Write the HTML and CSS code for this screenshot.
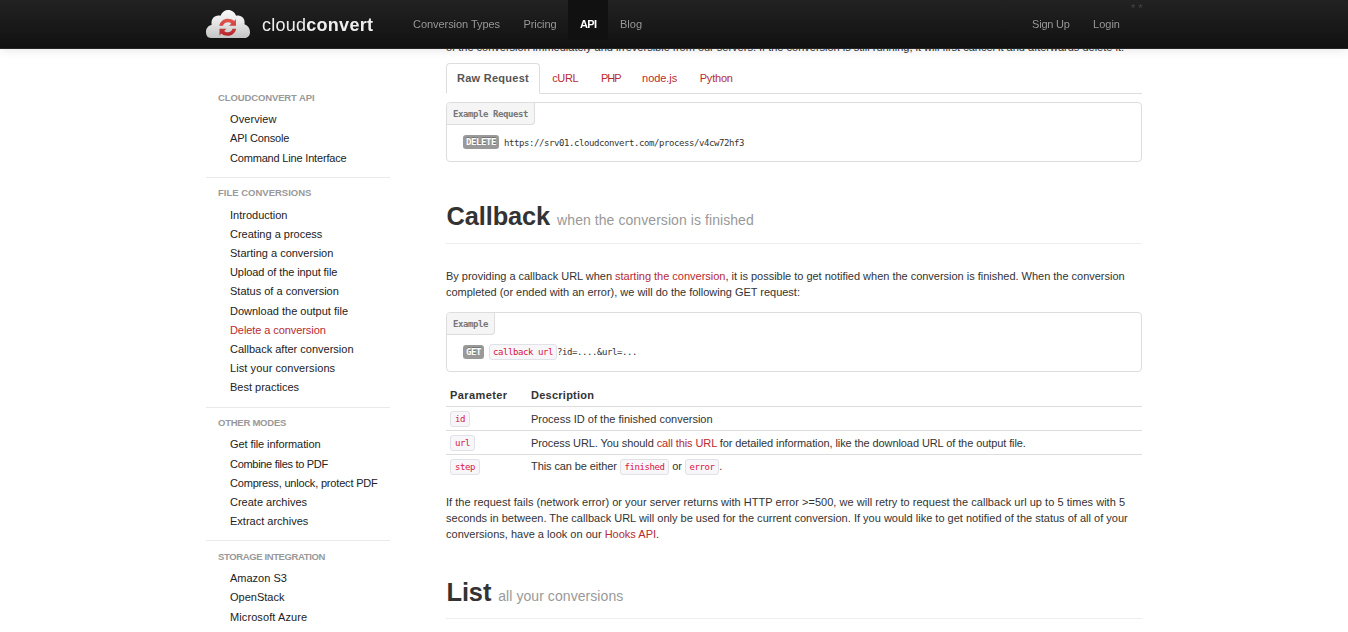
FILE: index.html
```html
<!DOCTYPE html>
<html lang="en">
<head>
<meta charset="utf-8">
<title>CloudConvert API</title>
<link rel="stylesheet" href="styles.css">
</head>
<body>
<header class="navbar">
  <div class="navbar-inner">
    <a class="brand">
      <svg class="logo" width="46" height="30" viewBox="0 0 46 30">
        <defs>
          <linearGradient id="cloud" x1="0" y1="0" x2="0" y2="1"><stop offset="0" stop-color="#fafafa"/><stop offset=".45" stop-color="#e6e6e6"/><stop offset="1" stop-color="#c4c4c4"/></linearGradient>
          <linearGradient id="arrow" x1="0" y1="9" x2="0" y2="26" gradientUnits="userSpaceOnUse"><stop offset="0" stop-color="#e2574f"/><stop offset="1" stop-color="#b0242a"/></linearGradient>
        </defs>
        <path fill="url(#cloud)" d="M6 28C2.500 28 1 25 1 22C1 18 3.500 15.500 6.700 14.700C5.500 8.500 10 4.500 15.500 5.700C17 2 20 0 23 0C27 0 30 2.500 31 5.700C36.500 4.500 40.500 8.500 39.500 14.300C43 15.500 45 18.500 45 22C45 25.500 43 28 39.500 28Z"/>
        <g fill="url(#arrow)">
          <path d="M14.300 15.800C15.200 11.500 18.500 8.800 22.800 8.800C25.600 8.800 27.600 9.600 29.200 11L31 9V15.800H24L26.300 13.700C25.400 12.800 24.200 12.300 22.800 12.300C20.300 12.300 18.600 13.600 18 15.800Z"/>
          <path d="M31.200 18.800C30.300 23.100 27 25.800 22.700 25.800C19.900 25.800 17.900 25 16.300 23.600L14.500 25.600V18.800H21.500L19.200 20.900C20.100 21.800 21.300 22.300 22.700 22.300C25.200 22.300 26.900 21 27.500 18.800Z"/>
        </g>
      </svg>
      <span class="brand-name">cloud<b>convert</b></span>
    </a>
    <nav class="nav">
      <a class="types">Conversion Types</a><a class="pricing">Pricing</a><a class="active">API</a><a>Blog</a>
    </nav>
    <nav class="nav account"><a class="signup">Sign Up</a><a>Login</a></nav>
    <span class="stars">**</span>
  </div>
</header>
<div class="container">
  <aside class="sidebar">
    <section>
      <h3 class="s1">CLOUDCONVERT API</h3>
      <ul><li class="loose">Overview</li><li class="tight">API Console</li><li class="tight">Command Line Interface</li></ul>
    </section>
    <section>
      <h3 class="s2">FILE CONVERSIONS</h3>
      <ul><li>Introduction</li><li>Creating a process</li><li>Starting a conversion</li><li class="snug">Upload of the input file</li><li>Status of a conversion</li><li>Download the output file</li><li class="current">Delete a conversion</li><li>Callback after conversion</li><li class="loose">List your conversions</li><li>Best practices</li></ul>
    </section>
    <section>
      <h3 class="s3">OTHER MODES</h3>
      <ul><li class="snug">Get file information</li><li class="tighter">Combine files to PDF</li><li class="tight">Compress, unlock, protect PDF</li><li>Create archives</li><li>Extract archives</li></ul>
    </section>
    <section>
      <h3 class="s4">STORAGE INTEGRATION</h3>
      <ul><li>Amazon S3</li><li>OpenStack</li><li class="loose">Microsoft Azure</li></ul>
    </section>
  </aside>
  <main class="content">
    <p class="intro">of the conversion immediately and irreversible from our servers. If the conversion is still running, it will first cancel it and afterwards delete it.</p>
    <ul class="tabs"><li class="active">Raw Request</li><li class="curl">cURL</li><li class="php">PHP</li><li class="node">node.js</li><li>Python</li></ul>
    <div class="example">
      <span class="label">Example Request</span>
      <div class="request"><span class="method">DELETE</span><span class="url">https://srv01.cloudconvert.com/process/v4cw72hf3</span></div>
    </div>
    <h1 class="heading">Callback <small>when the conversion is finished</small></h1>
    <p class="text lead">By providing a callback URL when <a>starting the conversion</a>, it is possible to get notified when the conversion is finished. When the conversion<br>completed (or ended with an error), we will do the following GET request:</p>
    <div class="example">
      <span class="label">Example</span>
      <div class="request"><span class="method">GET</span><span><code>callback url</code>?id=....&amp;url=...</span></div>
    </div>
    <table class="params">
      <thead><tr><th>Parameter</th><th>Description</th></tr></thead>
      <tbody>
        <tr><td><code>id</code></td><td>Process ID of the finished conversion</td></tr>
        <tr><td><code>url</code></td><td class="detail">Process URL. You should <a>call this URL</a> for detailed information, like the download URL of the output file.</td></tr>
        <tr><td><code>step</code></td><td class="detail values">This can be either <code>finished</code> or <code>error</code>.</td></tr>
      </tbody>
    </table>
    <p class="retry">If the request fails (network error) or your server returns with HTTP error &gt;=500, we will retry to request the callback url up to 5 times with 5<br><span class="even">seconds in between. The callback URL will only be used for the current conversion. If you would like to get notified of the status of all of your<br>conversions, have a look on our <a>Hooks API</a>.</span></p>
    <h1 class="heading list">List <small>all your conversions</small></h1>
  </main>
</div>
</body>
</html>
```
FILE: styles.css
```css
* { box-sizing: border-box; }
html, body { height: 632px; overflow: hidden; }
body { margin: 0; background: #fff; color: #333; font: 11px/16px "Liberation Sans", Arial, sans-serif; }
ul { list-style: none; margin: 0; padding: 0; }
a { color: #b82b30; }

.navbar { position: fixed; z-index: 2; top: 0; left: 0; width: 100%; height: 49px; background: linear-gradient(#222, #111); border-bottom: 1px solid #252525; box-shadow: 0 1px 10px rgba(0,0,0,.1); }
.navbar-inner { position: relative; display: flex; width: 936px; height: 48px; margin-left: 205px; }
.brand { display: flex; width: 196px; }
.logo { flex: none; margin-top: 10px; }
.brand-name { margin: 13px 0 0 11px; color: #eee; font-size: 18px; line-height: 24px; letter-spacing: .26px; white-space: nowrap; }
.nav { display: flex; height: 40px; }
.nav a { padding: 16px 12px 0; color: #999; white-space: nowrap; text-shadow: 0 -1px 0 rgba(0,0,0,.25); }
.nav .types { width: 110.500px; letter-spacing: -.05px; }
.nav .pricing { width: 56.500px; letter-spacing: -.1px; }
.nav .active { width: 40px; background: #111; color: #fff; font-weight: bold; letter-spacing: -.7px; }
.account { width: 111px; margin-left: 366px; }
.account .signup { width: 61px; letter-spacing: -.2px; }
.stars { position: absolute; left: 926px; top: 0; color: #444; letter-spacing: 3px; }

.container { display: flex; width: 936px; margin-left: 206px; }
.sidebar { width: 184px; margin-right: 56px; padding-top: 83px; }
.sidebar section { border-bottom: 1px solid #e9e9e9; padding-bottom: 9px; }
.sidebar h3 { margin: 0; padding: 6px 12px 0; font-size: 9.500px; line-height: 17px; color: #999; white-space: nowrap; }
.sidebar .s1 { margin-bottom: 4.200px; letter-spacing: -.12px; }
.sidebar .s2 { margin-bottom: 4.800px; }
.sidebar .s3 { margin-bottom: 4.800px; letter-spacing: -.24px; }
.sidebar .s4 { padding-top: 6.500px; margin-bottom: 4.300px; letter-spacing: -.38px; }
.sidebar li { padding-left: 24px; line-height: 19.200px; color: #222; white-space: nowrap; }
.sidebar .tight { letter-spacing: -.18px; }
.sidebar .tighter { letter-spacing: -.3px; }
.sidebar .snug { letter-spacing: -.09px; }
.sidebar .loose { letter-spacing: .09px; }
.sidebar .current { color: #b82b30; letter-spacing: -.08px; }

.content { width: 696px; padding-top: 39px; }
p { margin: 0; white-space: nowrap; }
.tabs { display: flex; height: 31px; margin: 8px 0; border-bottom: 1px solid #ddd; color: #b82b30; letter-spacing: -.22px; }
.tabs li { padding: 7px 11px 0; margin-right: 1.200px; height: 31px; }
.tabs .curl { width: 47.500px; letter-spacing: -.35px; }
.tabs .php { width: 40px; letter-spacing: -.9px; }
.tabs .node { width: 56.500px; letter-spacing: -.05px; }
.tabs .active { width: 94px; padding: 6px 10px 0; border: 1px solid #ddd; border-bottom-color: #fff; border-radius: 4px 4px 0 0; color: #555; font-weight: bold; background: #fff; letter-spacing: .27px; white-space: nowrap; }
.example { height: 60px; border: 1px solid #ddd; border-radius: 4px; font: 9px/16px "DejaVu Sans Mono", monospace; letter-spacing: -.418px; }
.label { display: block; width: 88px; height: 22px; padding: 3px 6px; background: #f5f5f5; border: 1px solid #ddd; border-width: 0 1px 1px 0; border-radius: 4px 0 4px 0; color: #777; font-weight: bold; }
.text + .example .label { width: 48px; }
.request { display: flex; align-items: center; gap: 5px; height: 16px; margin: 9px 16px 0; white-space: pre; }
.url { padding-top: 2px; }
.method { padding: 0 3px; height: 14px; line-height: 15px; color: #fff; background: #999; border-radius: 3px; font-weight: bold; text-shadow: 0 -1px 0 rgba(0,0,0,.25); }
code { display: inline-block; padding: 0 4px; height: 16px; line-height: 15px; border: 1px solid #e1e1e8; border-radius: 3px; background: #f7f7f9; color: #d14; font-family: "DejaVu Sans Mono", monospace; font-size: 9px; letter-spacing: -.418px; vertical-align: middle; }
.request code { padding: 0 3px; }
.heading { margin: 39px 0 24px; height: 43px; border-bottom: 1px solid #eee; font-size: 25.400px; line-height: 30px; color: #333; text-indent: .5px; letter-spacing: -.1px; }
.heading small { font-size: 14px; font-weight: normal; color: #999; letter-spacing: .07px; }
.lead { margin-bottom: 12px; letter-spacing: -.015px; }
.params { width: 100%; margin: 12px 0 16px; border-collapse: collapse; table-layout: fixed; }
.params th, .params td { height: 24px; padding: 1px 4px 0; text-align: left; white-space: nowrap; line-height: 16px; }
.params th { height: 22px; padding-top: 0; letter-spacing: .4px; }
.params th + th { letter-spacing: .25px; }
.params th:first-child { width: 81px; }
.params td { border-top: 1px solid #ddd; }
.params td:first-child { padding-top: 0; }
.params .detail { letter-spacing: -.09px; }
.params .values { padding-top: 1px; }
.values code { padding: 0 3.700px; vertical-align: baseline; }
.retry { letter-spacing: .03px; }
.even { letter-spacing: .008px; }
.heading.list { margin-top: 35px; height: 42px; }
```
